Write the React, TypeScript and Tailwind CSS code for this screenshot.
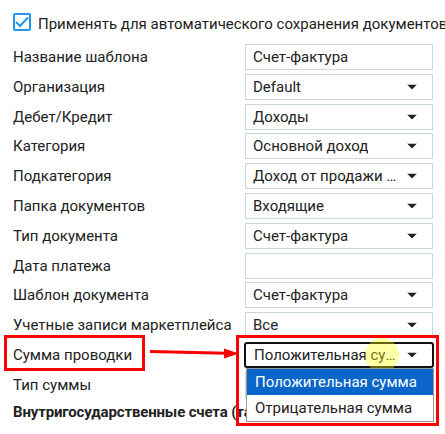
import React from "react";

const Caret = () => (
  <svg className="absolute right-[15px] top-1/2 -translate-y-1/2" width="10" height="5" viewBox="0 0 10 5">
    <path d="M0 0 H10 L5 5 Z" fill="#222" />
  </svg>
);

type Row = { label: string; value?: string; select?: boolean; focused?: boolean };

const rows: Row[] = [
  { label: "Название шаблона", value: "Счет-фактура" },
  { label: "Организация", value: "Default", select: true },
  { label: "Дебет/Кредит", value: "Доходы", select: true },
  { label: "Категория", value: "Основной доход", select: true },
  { label: "Подкатегория", value: "Доход от продажи товаров", select: true },
  { label: "Папка документов", value: "Входящие", select: true },
  { label: "Тип документа", value: "Счет-фактура", select: true },
  { label: "Дата платежа", value: "" },
  { label: "Шаблон документа", value: "Счет-фактура", select: true },
  { label: "Учетные записи маркетплейса", value: "Все", select: true },
  { label: "Сумма проводки", value: "Положительная сумма", select: true, focused: true },
  { label: "Тип суммы", value: "", select: true },
];

export default function App() {
  return (
    <div className="relative w-[445px] h-[434px] overflow-hidden bg-white font-['Roboto',sans-serif] text-[15px] leading-[18px] text-[#222]">
      <div className="pl-[13px] pr-[12px] pt-[13px]">
        <div className="flex items-center h-[18px] gap-[7px] whitespace-nowrap">
          <div className="w-[18px] h-[18px] shrink-0 rounded-[2px] border-2 border-[#2196f3] flex items-center justify-center">
            <svg width="14" height="12" viewBox="0 0 14 12">
              <path d="M1 6 L5 10 L13 1.5" fill="none" stroke="#2196f3" strokeWidth="2" />
            </svg>
          </div>
          <span className="pt-[3px]">Применять для автоматического сохранения документов</span>
        </div>

        <div className="mt-[13px] flex flex-col gap-[3.8px]">
          {rows.map((r) => (
            <div key={r.label} className="flex items-center h-[26px]">
              <div className="flex-1 whitespace-nowrap">{r.label}</div>
              {r.focused ? (
                <div className="relative w-[190px] h-[26px] -mr-px border-2 border-[#111] rounded-[3px] pl-[8px] pr-[34px] flex items-center">
                  <span className="truncate">{r.value}</span>
                  <Caret />
                </div>
              ) : (
                <div className="relative w-[188px] h-[26px] border border-[#c9d8de] pl-[7px] pr-[34px] flex items-center">
                  <span className="truncate">{r.value}</span>
                  {r.select && <Caret />}
                </div>
              )}
            </div>
          ))}
        </div>

        <div className="mt-[5px] font-bold whitespace-nowrap tracking-[-0.15px]">Внутригосударственные счета (таможня)</div>
      </div>

      {/* yellow cursor highlight */}
      <div className="absolute left-[365px] top-[338px] w-[34px] h-[34px] rounded-full bg-[#ffff00]/35" />

      {/* dropdown list */}
      <div className="absolute left-[246px] top-[368px] w-[188px] h-[54px] bg-white border border-[#9a9a9a] flex flex-col">
        <div className="h-[26px] bg-[#0b66c9] text-white pl-[8px] flex items-center">Положительная сумма</div>
        <div className="h-[26px] pl-[8px] flex items-center">Отрицательная сумма</div>
      </div>

      {/* red annotations */}
      <div className="absolute left-[4px] top-[335px] w-[141px] h-[36px] border-[3px] border-[#ff0000]" />
      <div className="absolute left-[236px] top-[335px] w-[203px] h-[91px] border-[3px] border-[#ff0000]" />
      <svg className="absolute left-0 top-0" width="445" height="434" viewBox="0 0 445 434">
        <path d="M150 351.5 L226 353.3" stroke="#ff0000" strokeWidth="3" fill="none" />
        <path d="M239 353.6 L224 348.5 L224 358.5 Z" fill="#ff0000" />
      </svg>
    </div>
  );
}
